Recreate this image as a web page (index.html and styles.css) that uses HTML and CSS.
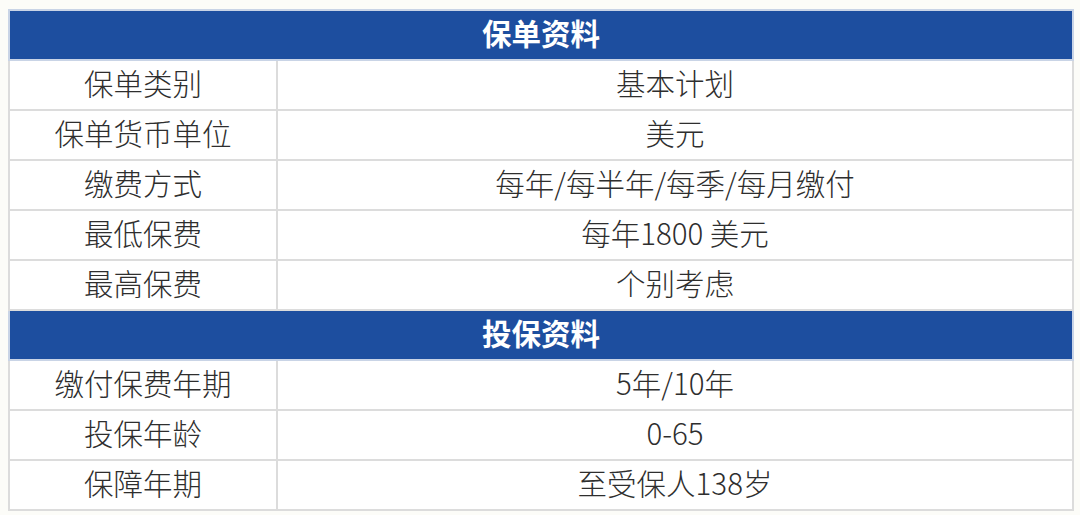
FILE: index.html
```html
<!DOCTYPE html>
<html lang="zh-CN">
<head>
<meta charset="utf-8">
<link rel="stylesheet" href="styles.css">
</head>
<body>
<table class="info">
  <colgroup><col class="c1"><col class="c2"></colgroup>
  <tr class="head"><td colspan="2">保单资料</td></tr>
  <tr><td>保单类别</td><td>基本计划</td></tr>
  <tr><td>保单货币单位</td><td>美元</td></tr>
  <tr><td>缴费方式</td><td>每年/每半年/每季/每月缴付</td></tr>
  <tr><td>最低保费</td><td>每年1800 美元</td></tr>
  <tr><td>最高保费</td><td>个别考虑</td></tr>
  <tr class="head"><td colspan="2">投保资料</td></tr>
  <tr><td>缴付保费年期</td><td>5年/10年</td></tr>
  <tr><td>投保年龄</td><td>0-65</td></tr>
  <tr><td>保障年期</td><td>至受保人138岁</td></tr>
</table>
</body>
</html>
```
FILE: styles.css
```css
html, body {
  margin: 0;
  background: #fcfcf8;
}
body {
  padding: 9px 0 0 8px;
}
.info {
  width: 1066px;
  border-collapse: collapse;
  table-layout: fixed;
  font-family: "Noto Sans CJK SC", "Noto Sans", sans-serif;
  font-size: 29.5px;
  font-weight: 300;
  color: #2e2e2e;
  background: #fff;
}
.c1 { width: 268px; }
.info td {
  height: 42px;
  padding: 0 0 6px 0;
  border: 2px solid #dcdcdc;
  text-align: center;
  vertical-align: middle;
  line-height: 30px;
}
.info tr.head td {
  background: #1d4e9f;
  color: #fff;
  font-weight: bold;
  border-color: #c9d4e6;
}
```
